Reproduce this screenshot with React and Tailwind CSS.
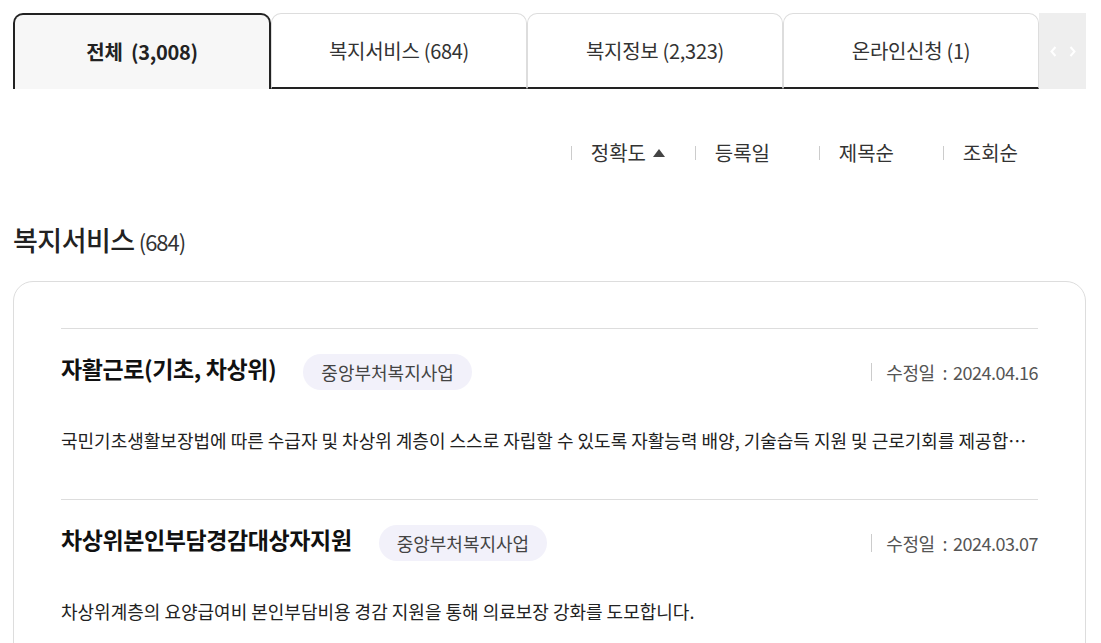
import React from 'react';

const tabs = [
  { label: '전체  (3,008)', active: true },
  { label: '복지서비스 (684)' },
  { label: '복지정보 (2,323)' },
  { label: '온라인신청 (1)' },
];

const sorts = ['정확도', '등록일', '제목순', '조회순'];

const items = [
  {
    title: '자활근로(기초, 차상위)',
    tag: '중앙부처복지사업',
    date: '2024.04.16',
    desc: '국민기초생활보장법에 따른 수급자 및 차상위 계층이 스스로 자립할 수 있도록 자활능력 배양, 기술습득 지원 및 근로기회를 제공합니다.',
  },
  {
    title: '차상위본인부담경감대상자지원',
    tag: '중앙부처복지사업',
    date: '2024.03.07',
    desc: '차상위계층의 요양급여비 본인부담비용 경감 지원을 통해 의료보장 강화를 도모합니다.',
  },
];

const App = () => {
  return (
    <div className="bg-white min-h-screen pl-[13px] pr-[15px] pt-[13px] text-[#222] font-['Noto_Sans_CJK_KR','Noto_Sans',sans-serif]">
      {/* tabs */}
      <div className="flex h-[76px]">
        {tabs.map((t) =>
          t.active ? (
            <div
              key={t.label}
              className="flex-1 flex items-center justify-center bg-[#f7f7f7] border-2 border-b-0 border-[#222] rounded-t-[10px] text-[20px] font-bold whitespace-pre tracking-[-0.3px]"
            >
              {t.label}
            </div>
          ) : (
            <div
              key={t.label}
              className="flex-1 flex items-center justify-center bg-white border border-[#ddd] border-b-2 border-b-[#222] rounded-t-[10px] text-[20px] text-[#333] tracking-[-0.3px]"
            >
              {t.label}
            </div>
          )
        )}
        <div className="w-[47px] flex items-center justify-center gap-[12px] bg-[#eee] text-white">
          <svg width="7" height="11" viewBox="0 0 7 11" fill="none" stroke="currentColor" strokeWidth="2">
            <path d="M5.5 1L1.5 5.5L5.5 10" />
          </svg>
          <svg width="7" height="11" viewBox="0 0 7 11" fill="none" stroke="currentColor" strokeWidth="2">
            <path d="M1.5 1L5.5 5.5L1.5 10" />
          </svg>
        </div>
      </div>

      {/* sort */}
      <div className="flex justify-end pr-[68px] mt-[51px] h-[26px] items-center">
        {sorts.map((s, i) => (
          <div key={s} className={`flex items-center ${i === sorts.length - 1 ? '' : 'w-[124px]'}`}>
            <span className="w-px h-[14px] bg-[#ccc]" />
            <span className="flex items-center text-[20px] text-[#333] pl-[19px]">
              {s}
              {i === 0 && (
                <svg className="ml-[7px]" width="12" height="8" viewBox="0 0 12 8" fill="#444">
                  <path d="M6 0L12 8H0Z" />
                </svg>
              )}
            </span>
          </div>
        ))}
      </div>

      {/* heading */}
      <h2 className="mt-[56px] h-[36px] flex items-baseline tracking-[-0.5px] leading-[36px]">
        <span className="text-[27px] font-medium text-[#222]">복지서비스</span>
        <span className="text-[22px] text-[#333] ml-[4px] tracking-[-1px]">(684)</span>
      </h2>

      {/* list card */}
      <div className="mt-[23px] border border-[#ddd] rounded-[20px] px-[47px] pt-[46px]">
        {items.map((it) => (
          <div key={it.title} className="border-t border-[#ddd] pt-[25px] pb-[47px]">
            <div className="flex items-center h-[36px]">
              <div className="text-[23px] font-bold text-[#111] tracking-[-0.4px] mb-[8px]">{it.title}</div>
              <span className="ml-[27px] h-[36px] px-[18px] flex items-center rounded-full bg-[#f2f1fa] text-[18px] text-[#444]">
                {it.tag}
              </span>
              <div className="ml-auto flex items-center text-[18px] text-[#555] tracking-[-0.5px]">
                <span className="w-px h-[18px] bg-[#ccc] mr-[14px]" />
                수정일<span className="ml-[8px] mr-[6px]">:</span>{it.date}
              </div>
            </div>
            <p className="mt-[38px] text-[18px] text-[#222] truncate leading-[24px]">{it.desc}</p>
          </div>
        ))}
      </div>
    </div>
  );
};

export default App;
